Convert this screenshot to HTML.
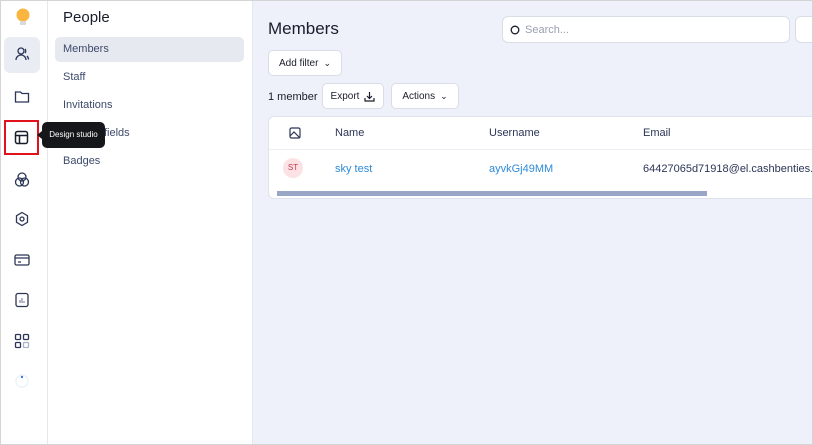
<!DOCTYPE html>
<html><head><style>
*{box-sizing:border-box;margin:0;padding:0}
body{width:813px;height:445px;overflow:hidden;font-family:"Liberation Sans",sans-serif;background:#fff;position:relative}
.frame{position:absolute;inset:0;border:1px solid #d4d4d4;pointer-events:none;z-index:10}
.side{position:absolute;left:0;top:0;width:48px;height:445px;background:#fff;border-right:1px solid #e6e8f0}
.nav{position:absolute;left:48px;top:0;width:205px;height:445px;background:#fff;border-right:1px solid #e6e8f0}
.main{position:absolute;left:253px;top:0;width:560px;height:445px;background:#eef1f9}
.ic{position:absolute;left:14px}
.nav h1{position:absolute;left:15px;top:9px;font-size:15px;font-weight:normal;color:#1a1d2b}
.nav .it{position:absolute;left:7px;width:189px;height:25px;padding-left:8px;line-height:25px;font-size:11px;color:#3d4a6b;border-radius:5px}
.btn{position:absolute;background:#fff;border:1px solid #d8dde8;border-radius:5px;font-size:10px;color:#1a1d2b;display:flex;align-items:center;justify-content:center;gap:5px}
</style></head><body>
<div class="side">
 <svg class="ic" style="top:6px;left:13px" width="20" height="22" viewBox="0 0 20 22"><circle cx="10" cy="9" r="6.5" fill="#f9b53f"/><rect x="7" y="15" width="6" height="4" rx="1" fill="#d9d9d9"/></svg>
 <div style="position:absolute;left:4px;top:37px;width:36px;height:36px;background:#e9ecf3;border-radius:6px"></div>
 <svg class="ic" style="top:46px" width="16" height="16" viewBox="0 0 16 16" fill="none" stroke="#2b3556" stroke-width="1.3"><circle cx="7" cy="5" r="3"/><path d="M2 14c0-3 2.5-5 5-5s5 2 5 5M11 3c1 1 1 3 0 4M13 10c1 1 1.5 2 1.5 3.5"/></svg>
 <svg class="ic" style="top:89px" width="16" height="15" viewBox="0 0 16 15" fill="none" stroke="#2b3556" stroke-width="1.3"><path d="M1.5 3h5l1.5 1.5h6.5v8.5h-13z"/></svg>
 <div style="position:absolute;left:4px;top:120px;width:35px;height:35px;border:2px solid #e1121b"></div>
 <svg class="ic" style="top:130px" width="15" height="15" viewBox="0 0 15 15" fill="none" stroke="#1a1d2b" stroke-width="1.5"><rect x="1.5" y="1.5" width="12" height="12" rx="2"/><path d="M1.5 5.5h12M5.5 5.5v8"/></svg>
 <svg class="ic" style="top:171px" width="16" height="17" viewBox="0 0 16 17" fill="none" stroke="#2b3556" stroke-width="1.3"><circle cx="8" cy="6" r="4"/><circle cx="5.5" cy="11" r="4"/><circle cx="10.5" cy="11" r="4"/></svg>
 <svg class="ic" style="top:211px" width="16" height="16" viewBox="0 0 16 16" fill="none" stroke="#2b3556" stroke-width="1.3"><path d="M8 1.5l5.5 3.2v6.6L8 14.5l-5.5-3.2V4.7z"/><circle cx="8" cy="8" r="2"/></svg>
 <svg class="ic" style="top:253px" width="16" height="14" viewBox="0 0 16 14" fill="none" stroke="#2b3556" stroke-width="1.3"><rect x="1" y="2" width="14" height="10" rx="1.5"/><path d="M1 5h14M4 9h3"/></svg>
 <svg class="ic" style="top:292px" width="16" height="16" viewBox="0 0 16 16" fill="none" stroke="#2b3556" stroke-width="1.3"><rect x="2" y="1.5" width="12" height="13" rx="2"/><path d="M6 11V8M8 11V6M10 11V9" stroke="#8a93ad"/></svg>
 <svg class="ic" style="top:333px" width="16" height="16" viewBox="0 0 16 16" fill="none" stroke-width="1.3"><rect x="1.5" y="1.5" width="5" height="5" rx="1" stroke="#2b3556"/><rect x="9.5" y="1.5" width="5" height="5" rx="1" stroke="#2b3556"/><rect x="1.5" y="9.5" width="5" height="5" rx="1" stroke="#2b3556"/><rect x="9.5" y="9.5" width="5" height="5" rx="1" stroke="#aab2c8"/></svg>
 <svg style="position:absolute;left:14px;top:372px" width="16" height="16"><circle cx="8" cy="9" r="6" fill="none" stroke="#eef2fb" stroke-width="1.5"/><circle cx="8" cy="5" r="1.2" fill="#3b7be8"/></svg>
</div>
<div class="nav">
 <h1>People</h1>
 <div class="it" style="top:37px;background:#e6e9f0">Members</div>
 <div class="it" style="top:65px">Staff</div>
 <div class="it" style="top:93px">Invitations</div>
 <div class="it" style="top:121px">Custom fields</div>
 <div class="it" style="top:149px">Badges</div>
</div>
<div style="position:absolute;left:42px;top:122px;width:63px;height:26px;background:#16171a;border-radius:5px;color:#fff;font-size:8px;line-height:26px;text-align:center;z-index:5">Design studio</div>
<div style="position:absolute;left:37px;top:131px;width:0;height:0;border-top:4px solid transparent;border-bottom:4px solid transparent;border-right:5px solid #16171a;z-index:5"></div>
<div class="main">
 <div style="position:absolute;left:15px;top:19px;font-size:17px;color:#1a1d2b">Members</div>
 <div class="btn" style="left:249px;top:16px;width:288px;height:27px;justify-content:flex-start;padding-left:7px;color:#9aa0b0;font-size:11px;border-radius:6px"><svg width="10" height="10"><circle cx="5" cy="5" r="3.8" fill="none" stroke="#1a1d2b" stroke-width="1.3"/></svg>Search...</div>
 <div class="btn" style="left:542px;top:16px;width:30px;height:27px;border-radius:6px"></div>
 <div class="btn" style="left:15px;top:50px;width:74px;height:26px">Add filter <span style="font-size:9px">&#8964;</span></div>
 <div style="position:absolute;left:15px;top:91px;font-size:11px;color:#1a1d2b">1 member</div>
 <div class="btn" style="left:69px;top:83px;width:62px;height:26px">Export <svg width="11" height="11" fill="none" stroke="#1a1d2b" stroke-width="1.2"><path d="M5.5 1v6M3 5l2.5 2.5L8 5M1 7v3h9V7"/></svg></div>
 <div class="btn" style="left:138px;top:83px;width:68px;height:26px">Actions <span style="font-size:9px">&#8964;</span></div>
 <div style="position:absolute;left:15px;top:116px;width:560px;height:83px;background:#fff;border:1px solid #dfe3ec;border-radius:6px;overflow:hidden">
  <svg style="position:absolute;left:20px;top:10px" width="12" height="12" fill="none" stroke="#2b3556" stroke-width="1.2"><rect x="1" y="1" width="10" height="10" rx="1.5"/><path d="M1 9l4-4 6 6"/></svg>
  <div style="position:absolute;left:66px;top:10px;font-size:11px;color:#2b3556">Name</div>
  <div style="position:absolute;left:220px;top:10px;font-size:11px;color:#2b3556">Username</div>
  <div style="position:absolute;left:374px;top:10px;font-size:11px;color:#2b3556">Email</div>
  <div style="position:absolute;left:0;top:32px;width:100%;border-top:1px solid #eceef3"></div>
  <div style="position:absolute;left:14px;top:41px;width:20px;height:20px;border-radius:50%;background:#fce2e4;color:#c0394a;font-size:8px;line-height:20px;text-align:center">ST</div>
  <div style="position:absolute;left:66px;top:46px;font-size:11px;color:#2f8ad8">sky test</div>
  <div style="position:absolute;left:220px;top:46px;font-size:11px;color:#2f8ad8">ayvkGj49MM</div>
  <div style="position:absolute;left:374px;top:46px;font-size:11px;color:#2b3556;white-space:nowrap">64427065d71918@el.cashbenties.c</div>
  <div style="position:absolute;left:8px;top:74px;width:430px;height:5px;background:#9aa6c6"></div>
 </div>
</div>
<div class="frame"></div>
</body></html>
